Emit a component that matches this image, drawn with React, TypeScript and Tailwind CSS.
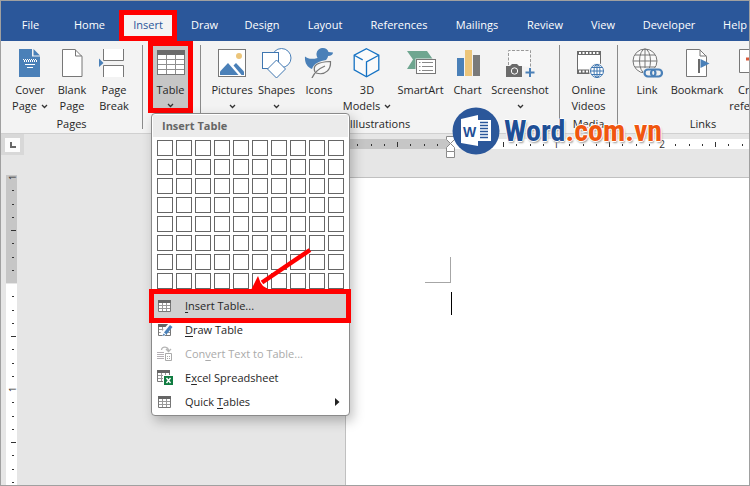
import React, { useEffect, useState } from 'react';

type IconProps = { children: React.ReactNode; w?: number };

function Glyph({ children, w = 30 }: IconProps) {
  return (
    <svg width={w} height={30} viewBox={`0 0 ${w} 30`} fill="none" className="block shrink-0" aria-hidden="true">
      {children}
    </svg>
  );
}

const CoverIcon = () => (
  <Glyph>
    <path d="M4 1h13v7.500h8V29H4z" fill="#4a80b8" />
    <path d="M18.500 1v6.500H25z" fill="#4a80b8" />
    <path d="M8 11.500h13M9 13.500h13" stroke="#fff" strokeDasharray="1 1" />
    <path d="M9 12.500h13" stroke="#fff" strokeDasharray="1 1" />
    <path d="M10 16.500h10M12 19.500h6" stroke="#fff" />
  </Glyph>
);

const BlankIcon = () => (
  <Glyph>
    <path d="M5.500 1.500h12.500l7 7v20H5.500z" fill="#fff" stroke="#777" />
    <path d="M18.500 1.500v6.500H25" stroke="#777" />
  </Glyph>
);

const BreakIcon = () => (
  <Glyph>
    <path d="M4.500 1v11.500h20V1M4.500 29V17.500h20V29" fill="#fff" stroke="#777" />
    <path d="M0 10.500l4.500 4.500L0 19z" fill="#4a80b8" />
  </Glyph>
);

const TableIcon = () => (
  <Glyph>
    <rect x="1.500" y="2.500" width="27" height="24" fill="#fff" stroke="#777" />
    <path d="M1 2h28v5H1z" fill="#6b6b6b" />
    <path d="M10.500 7v19M19.500 7v19M2 11.500h26M2 16.500h26M2 21.500h26" stroke="#8f8f8f" />
  </Glyph>
);

const PicturesIcon = () => (
  <Glyph>
    <rect x="1.500" y="1.500" width="27" height="27" fill="#fff" stroke="#777" />
    <circle cx="22" cy="8" r="3" fill="#ecc57a" />
    <path d="M3 27v-3.500l8-8.500 10.500 12z" fill="#4a80b8" />
    <path d="M16.500 17.500l2.500-2.500 8 8.500V27h-2.500z" fill="#4a80b8" />
  </Glyph>
);

const ShapesIcon = () => (
  <Glyph>
    <circle cx="19.500" cy="10" r="9.500" fill="#fff" stroke="#4a80b8" />
    <rect x=".5" y="4.500" width="16" height="16" fill="#fff" stroke="#3f76b0" />
    <path d="M14.500 12l9 9-9 9-9-9z" fill="#fff" stroke="#3f76b0" />
  </Glyph>
);

const DuckIcon = () => (
  <Glyph>
    <path d="M19 0a6 6 0 0 1 5.500 4l4.500.500c0 2-2 3.500-5 3.500 0 1.500-.8 2.500-2 4C16 13 10 15 8 21 3 19 .5 15 1 8.500c3 2.500 7 3 12.500 1.500-.8-1.500-1.200-3-1-4.500A6 6 0 0 1 19 0z" fill="#4a80b8" />
    <path d="M11 24c-3-7 3-10 15.500-10.500C27 21 22 28 12 25" fill="#f8f8f8" stroke="#777" strokeWidth="1.200" />
    <path d="M8 30c2-5 6-9 13-12" stroke="#777" strokeWidth="1.300" />
  </Glyph>
);

const CubeIcon = () => (
  <Glyph>
    <path d="M14.500.700l12.300 6.500v14.600L14.500 28.800 2.200 21.800V7.200z" fill="#fafafa" stroke="#1673c4" strokeWidth="1.300" />
    <path d="M2.200 7.200l8.500 4.700M26.800 7.200L14.500 14v14.500" stroke="#1673c4" strokeWidth="1.300" />
  </Glyph>
);

const SmartArtIcon = () => (
  <Glyph w={32}>
    <path d="M2 3h20l6 8.500L22 21H2l6-9.500z" fill="#6fa690" />
    <rect x="10.500" y="10.500" width="21" height="16" fill="#f1f1f1" />
    <rect x="11.500" y="11.500" width="19" height="14" fill="#fff" stroke="#777" />
    <path d="M14 14.500h1.500M14 18.500h1.500M14 22.500h1.500M17 14.500h11M17 18.500h11M17 22.500h11" stroke="#888" />
  </Glyph>
);

const ChartIcon = () => (
  <Glyph>
    <path d="M4 10h7v18H4z" fill="#4a80b8" />
    <path d="M12 2h7v26h-7z" fill="#ecc57a" />
    <path d="M20 7h7v21h-7z" fill="#7a7a7a" />
  </Glyph>
);

const ScreenshotIcon = () => (
  <Glyph>
    <path d="M3.500 17V2.500h22V19" fill="#fafafa" stroke="#999" strokeDasharray="3 1.500" />
    <path d="M1 18h4l2-2h5l2 2h3v11H1z" fill="#6b6b6b" />
    <circle cx="9.500" cy="23" r="3.200" stroke="#fff" />
    <path d="M25 20v9M20.500 24.500h9" stroke="#4a80b8" strokeWidth="2" />
  </Glyph>
);

const VideoIcon = () => (
  <Glyph>
    <rect x="3.500" y="3.500" width="23" height="22" fill="#fff" stroke="#6b6b6b" />
    <path d="M3 5h24M3 23.500h24" stroke="#6b6b6b" strokeWidth="4" />
    <path d="M5 5h21M5 23.500h21" stroke="#fff" strokeWidth="2" strokeDasharray="2 1.500" />
    <circle cx="23" cy="23" r="8" fill="#f3f3f3" />
    <circle cx="23" cy="23" r="6.500" fill="#fff" stroke="#3f76b0" />
    <ellipse cx="23" cy="23" rx="3" ry="6.500" stroke="#3f76b0" />
    <path d="M23 16.500v13M16.500 23h13M17.500 19.500h11M17.500 26.500h11" stroke="#3f76b0" />
  </Glyph>
);

const LinkIcon = () => (
  <Glyph w={34}>
    <circle cx="15" cy="13" r="12" fill="#fafafa" stroke="#777" />
    <ellipse cx="15" cy="13" rx="5.500" ry="12" stroke="#777" />
    <path d="M15 1v24M3 13h24M5 7h20M5 19h20" stroke="#777" />
    <path d="M13 20h20v10H13z" fill="#f1f1f1" />
    <rect x="14.500" y="21.500" width="11" height="7" rx="3.500" stroke="#4a80b8" strokeWidth="2.200" />
    <rect x="21" y="21.500" width="11" height="7" rx="3.500" stroke="#4a80b8" strokeWidth="2.200" />
  </Glyph>
);

const BookmarkIcon = () => (
  <Glyph>
    <path d="M4.500 1.500h13l7 7v20h-20z" fill="#fff" stroke="#777" />
    <path d="M18 1.500v6.500h6.500" stroke="#777" />
    <path d="M17 11v14" stroke="#6b6b6b" strokeWidth="2" />
    <path d="M18.500 11l9 4.500-9 4.500z" fill="#4a80b8" />
  </Glyph>
);

const CrossIcon = () => (
  <Glyph>
    <path d="M.5 1.500h20l4 4v19H.5z" fill="#fff" stroke="#777" />
    <path d="M7 9.500h9v3H7z" fill="#d9593a" />
  </Glyph>
);

const Chevron = () => (
  <svg width="7" height="5" viewBox="0 0 7 5" fill="none" className="inline-block shrink-0" aria-hidden="true">
    <path d="M1 1l2.500 2.500L6 1" stroke="#333" strokeWidth="1.300" />
  </svg>
);

type ToolProps = {
  icon: React.ReactNode;
  top: string;
  bottom?: string;
  drop?: boolean;
  width: string;
  className?: string;
};

function Tool({ icon, top, bottom, drop, width, className = '' }: ToolProps) {
  return (
    <button type="button" className={`flex shrink-0 flex-col items-center pt-[7px] leading-4 whitespace-nowrap ${width} ${className}`}>
      {icon}
      <span className="mt-1">{top}</span>
      <span className="flex h-4 items-center gap-1">
        {bottom}
        {drop && <Chevron />}
      </span>
    </button>
  );
}

type GroupProps = { label: string; hideLabel?: boolean; className: string; children: React.ReactNode };

function Group({ label, hideLabel, className, children }: GroupProps) {
  return (
    <section aria-label={label} className={`relative flex shrink-0 flex-col ${className}`}>
      <div className="flex h-[74px]">{children}</div>
      {!hideLabel && <span className="text-center leading-5">{label}</span>}
    </section>
  );
}

const Divider = () => <div className="mt-1 h-[84px] w-px shrink-0 bg-[#8a8a8a]" />;

const tabs = [
  { name: 'File', width: 'w-[59px]' },
  { name: 'Home', width: 'w-[59px]' },
  { name: 'Insert', width: 'w-[58px]' },
  { name: 'Draw', width: 'w-[55px]' },
  { name: 'Design', width: 'w-[60px]' },
  { name: 'Layout', width: 'w-[66px]' },
  { name: 'References', width: 'w-[82px]' },
  { name: 'Mailings', width: 'w-[74px]' },
  { name: 'Review', width: 'w-[62px]' },
  { name: 'View', width: 'w-[54px]' },
  { name: 'Developer', width: 'w-[78px]' },
  { name: 'Help', width: 'w-[54px]' },
];

const GridGlyph = () => (
  <>
    <path d="M1.500 2.500h12v11h-12z" fill="#fff" stroke="#777" />
    <path d="M1 2h13v3H1z" fill="#666" />
    <path d="M5.500 5v8M9.500 5v8M2 7.500h11M2 10.500h11" stroke="#999" />
  </>
);

function MenuIcon({ kind }: { kind: string }) {
  return (
    <svg width="16" height="16" viewBox="0 0 16 16" fill="none" aria-hidden="true" className="shrink-0">
      {(kind === 'table' || kind === 'draw') && <GridGlyph />}
      {kind === 'draw' && (
        <>
          <path d="M5 13L14.500 2" stroke="#fff" strokeWidth="5" />
          <path d="M7 10.500l6-7.500 2.500 2-6 7.500z" fill="#4a80b8" />
          <path d="M6.500 11.500l2 1.500-3 1z" fill="#4a80b8" />
        </>
      )}
      {kind === 'convert' && (
        <>
          <path d="M0 6.500h7M0 8.500h7M0 10.500h7M0 12.500h7" stroke="#b5b0b5" />
          <path d="M4.500 4c0-4 7-4 7 1M9 3l2.500 2.500L14 3" stroke="#b5b5b5" strokeWidth="1.300" />
          <path d="M8.500 7.500h6v7h-6z" fill="#fff" stroke="#aaa" />
          <path d="M10 10.500h4M10 12.500h4" stroke="#aaa" strokeDasharray="1 1" />
        </>
      )}
      {kind === 'excel' && (
        <>
          <path d="M.5.500h12v11H.5z" fill="#fff" stroke="#777" />
          <path d="M0 0h13v3H0z" fill="#666" />
          <path d="M4.500 3v8M8.500 3v8M1 5.500h11M1 8.500h11" stroke="#999" />
          <path d="M6 5h10v11H6z" fill="#fff" />
          <path d="M7 6h9v9H7z" fill="#107c41" />
          <path d="M9.500 8l4 5M13.500 8l-4 5" stroke="#fff" strokeWidth="1.400" />
        </>
      )}
    </svg>
  );
}

const menuItems = [
  { kind: 'table', before: '', key: 'I', after: 'nsert Table...' },
  { kind: 'draw', before: '', key: 'D', after: 'raw Table' },
  { kind: 'convert', before: 'Con', key: 'v', after: 'ert Text to Table...', disabled: true },
  { kind: 'excel', before: 'E', key: 'x', after: 'cel Spreadsheet' },
  { kind: 'table', before: 'Quick ', key: 'T', after: 'ables', submenu: true },
];

function TableMenu() {
  return (
    <div className="absolute top-[72px] left-2 z-20 w-[199px] rounded border border-[#8a8a8a] bg-white p-px pb-0 shadow-[3px_5px_12px_rgba(0,0,0,0.25)]">
      <h2 className="bg-[#ebebeb] pl-[9px] leading-[22px] font-bold text-[#666]">Insert Table</h2>
      <div className="mt-[3px] grid w-max grid-cols-10 gap-[3px] pl-1">
        {Array.from({ length: 80 }, (_, i) => (
          <button key={i} type="button" aria-label={`${(i % 10) + 1} x ${Math.floor(i / 10) + 1}`} className="size-4 border border-[#666] bg-white" />
        ))}
      </div>
      <ul className="mt-[5px] pb-px">
        {menuItems.map((item, i) => (
          <li key={item.after} className="relative">
            <button
              type="button"
              disabled={item.disabled}
              className={`flex h-6 w-full items-center pr-2 pl-1 text-left ${i === 0 ? 'bg-[#d0d0d0]' : ''} ${item.disabled ? 'text-[#aaa]' : 'text-[#262626]'}`}
            >
              <MenuIcon kind={item.kind} />
              <span className="ml-3 flex-1 whitespace-pre">
                {item.before}
                <u className="underline-offset-2">{item.key}</u>
                {item.after}
              </span>
              {item.submenu && (
                <svg width="5" height="8" viewBox="0 0 5 8" aria-hidden="true">
                  <path d="M0 0l4.500 4L0 8z" fill="#222" />
                </svg>
              )}
            </button>
            {i === 0 && <span className="pointer-events-none absolute -inset-y-[5px] -right-[3px] -left-1 z-10 border-5 border-[#ff0000]" />}
          </li>
        ))}
      </ul>
      <svg width="64" height="46" viewBox="0 0 64 46" className="pointer-events-none absolute top-[133px] left-[98px] z-20" aria-hidden="true">
        <path d="M60 3L12 35.500" stroke="#ff0000" strokeWidth="4.500" />
        <path d="M1 43l7-14 2.500 6.500 2.500 3.500 5 3z" fill="#ff0000" />
      </svg>
    </div>
  );
}

const EIGHTH = 13.25;

/** Ruler marks, counted in eighths of an inch from the margin, that fit in the window. */
function useMarks(axis: 'innerWidth' | 'innerHeight', origin: number) {
  const [size, setSize] = useState(window[axis]);
  useEffect(() => {
    const update = () => setSize(window[axis]);
    window.addEventListener('resize', update);
    return () => window.removeEventListener('resize', update);
  }, [axis]);
  const last = Math.floor((size - origin - 4) / EIGHTH);
  return Array.from({ length: last + 9 }, (_, i) => i - 8).filter((n) => n !== 0);
}

function HorizontalRuler() {
  const marks = useMarks('innerWidth', 450).filter((n) => n > -8);
  return (
    <div className="h-[10px] overflow-hidden bg-white">
      <svg width="100%" height="10" className="block" aria-hidden="true">
        <path d="M0 0h105v10H0z" fill="#c6c6c6" />
        {marks.map((n) => {
          const x = Math.round(105 + n * EIGHTH);
          if (n % 8 === 0)
            return (
              <text key={n} x={x} y="9" fontSize="10" textAnchor="middle" fill="#333">
                {n / 8}
              </text>
            );
          return n % 4 === 0 ? <path key={n} d={`M${x} 3h1v5h-1z`} fill="#333" /> : <path key={n} d={`M${x} 5h1v2h-1z`} fill="#333" />;
        })}
      </svg>
    </div>
  );
}

function VerticalRuler() {
  const marks = useMarks('innerHeight', 283);
  return (
    <div className="ml-[5px] min-h-0 w-[11px] flex-1 overflow-hidden bg-white">
      <svg width="11" height="100%" className="block" aria-hidden="true">
        <path d="M0 0h11v108H0z" fill="#c6c6c6" />
        <path d="M0 108h11v1H0z" fill="#e6e6e6" />
        {marks.map((n) => {
          const y = Math.round(108 + n * EIGHTH);
          if (n % 8 === 0)
            return (
              <text key={n} x="10" y={y + 3} fontSize="9" fill="#333" transform={`rotate(-90 10 ${y + 3})`}>
                {Math.abs(n / 8)}
              </text>
            );
          return n % 4 === 0 ? <path key={n} d={`M5 ${y}h5v1H5z`} fill="#333" /> : <path key={n} d={`M6 ${y}h2v1H6z`} fill="#333" />;
        })}
      </svg>
    </div>
  );
}

function Watermark() {
  return (
    <div className="pointer-events-none absolute top-[106px] left-[451px] z-10 flex items-center">
      <svg width="48" height="48" viewBox="0 0 48 48" aria-hidden="true">
        <circle cx="24" cy="24" r="23.500" fill="#2b579a" />
        <path d="M26 13h13v21H26z" fill="#fff" />
        <path d="M28 15.500h8M28 18.500h8M28 21.500h8M28 24.500h8M28 27.500h8M28 30.500h8" stroke="#2b579a" strokeWidth="1.500" />
        <path d="M9 12l17-4v31L9 36z" fill="#fff" />
        <text x="17.500" y="30" textAnchor="middle" fontSize="14" fontWeight="700" fill="#1f4f96" className="font-['Liberation_Sans',sans-serif]">
          W
        </text>
      </svg>
      <span className="ml-1 font-['Roboto_Condensed','Open_Sans_Condensed','Noto_Sans_Condensed','Liberation_Sans',sans-serif] text-[30px] leading-[48px] font-bold text-[#1f4f96] [text-shadow:1px_0_#fff,-1px_0_#fff,0_1px_#fff,0_-1px_#fff,1px_2px_2px_#999]">
        Word<span className="text-[#f0560f]">.com.vn</span>
      </span>
    </div>
  );
}

export default function App() {
  return (
    <div className="relative flex h-screen w-full flex-col overflow-hidden border border-[#a0a0a0] bg-[#e6e6e6] font-['Open_Sans','Noto_Sans',sans-serif] text-[11px] text-[#262626]">
      <nav className="flex h-10 shrink-0 items-end bg-[#2b579a] text-white">
        {tabs.map((tab) => (
          <button
            key={tab.name}
            type="button"
            className={`h-[31px] shrink-0 ${tab.width} ${tab.name === 'Insert' ? 'border-5 border-[#ff0000] bg-[#f3f3f3] text-[#2b579a]' : ''}`}
          >
            {tab.name}
          </button>
        ))}
      </nav>

      <div className="flex h-[93px] shrink-0 border-b border-[#d0d0d0] bg-[#f3f3f3]">
        <Group label="Pages" className="w-[141px]">
          <div className="flex pl-2">
            <Tool icon={<CoverIcon />} top="Cover" bottom="Page" drop width="w-[42px]" />
            <Tool icon={<BlankIcon />} top="Blank" bottom="Page" width="w-[42px]" />
            <Tool icon={<BreakIcon />} top="Page" bottom="Break" width="w-[42px]" />
          </div>
        </Group>
        <Divider />
        <Group label="Tables" hideLabel className="w-[57px]">
          <div className="relative ml-[5px] flex">
            <Tool icon={<TableIcon />} top="Table" drop width="w-[45px]" className="h-[72px] bg-[#c6c6c6]" />
            <span className="pointer-events-none absolute inset-x-0 top-0 h-[72px] border-5 border-[#ff0000]" />
          </div>
          <TableMenu />
        </Group>
        <Divider />
        <Group label="Illustrations" className="w-[358px]">
          <div className="flex pl-[9px]">
            <Tool icon={<PicturesIcon />} top="Pictures" drop width="w-[44px]" />
            <Tool icon={<ShapesIcon />} top="Shapes" drop width="w-[45px]" />
            <Tool icon={<DuckIcon />} top="Icons" width="w-[40px]" />
            <Tool icon={<CubeIcon />} top="3D" bottom="Models" drop width="w-[56px]" />
            <Tool icon={<SmartArtIcon />} top="SmartArt" width="w-[51px]" />
            <Tool icon={<ChartIcon />} top="Chart" width="w-[43px]" />
            <Tool icon={<ScreenshotIcon />} top="Screenshot" drop width="w-[62px]" />
          </div>
        </Group>
        <Divider />
        <Group label="Media" className="w-[57px] items-center">
          <Tool icon={<VideoIcon />} top="Online" bottom="Videos" width="w-[42px]" />
        </Group>
        <Divider />
        <Group label="Links" className="w-[170px]">
          <div className="flex pl-[9px]">
            <Tool icon={<LinkIcon />} top="Link" width="w-[40px]" />
            <Tool icon={<BookmarkIcon />} top="Bookmark" width="w-[60px]" />
            <Tool icon={<CrossIcon />} top="Cross-" bottom="reference" width="w-[54px]" />
          </div>
        </Group>
      </div>

      <div className="flex min-h-0 flex-1">
        <div className="flex w-[23px] shrink-0 flex-col">
          <div className="mb-5 flex h-[21px] items-center justify-center bg-[#d8d8d8]">
            <button type="button" aria-label="Tab selector" className="flex h-[14px] w-[15px] items-center justify-center bg-[#fcfcfc]">
              <span className="size-[6px] border-b-2 border-l-2 border-[#666]" />
            </button>
          </div>
          <VerticalRuler />
        </div>
        <main className="flex min-w-0 flex-1 flex-col pt-[5px] pl-[321px]">
          <HorizontalRuler />
          <div className="mt-7 flex-1 border-t border-l border-[#c0c0c0] bg-white pt-[79px] pl-[79px]">
            <div className="size-[26px] border-r border-b border-[#a6a6a6]" />
            <div className="mt-[9px] ml-[26px] h-[23px] w-px bg-black" />
          </div>
        </main>
      </div>

      <svg width="9" height="22" viewBox="0 0 9 22" fill="none" className="absolute top-[135px] left-[445px]" aria-hidden="true">
        <path d="M.5.500h8v3l-4 4-4-4zM.5 21.500v-6h8v6zM.5 15.500v-4l4-4 4 4v4" fill="#fff" stroke="#8a8a8a" />
      </svg>
      <Watermark />
    </div>
  );
}
